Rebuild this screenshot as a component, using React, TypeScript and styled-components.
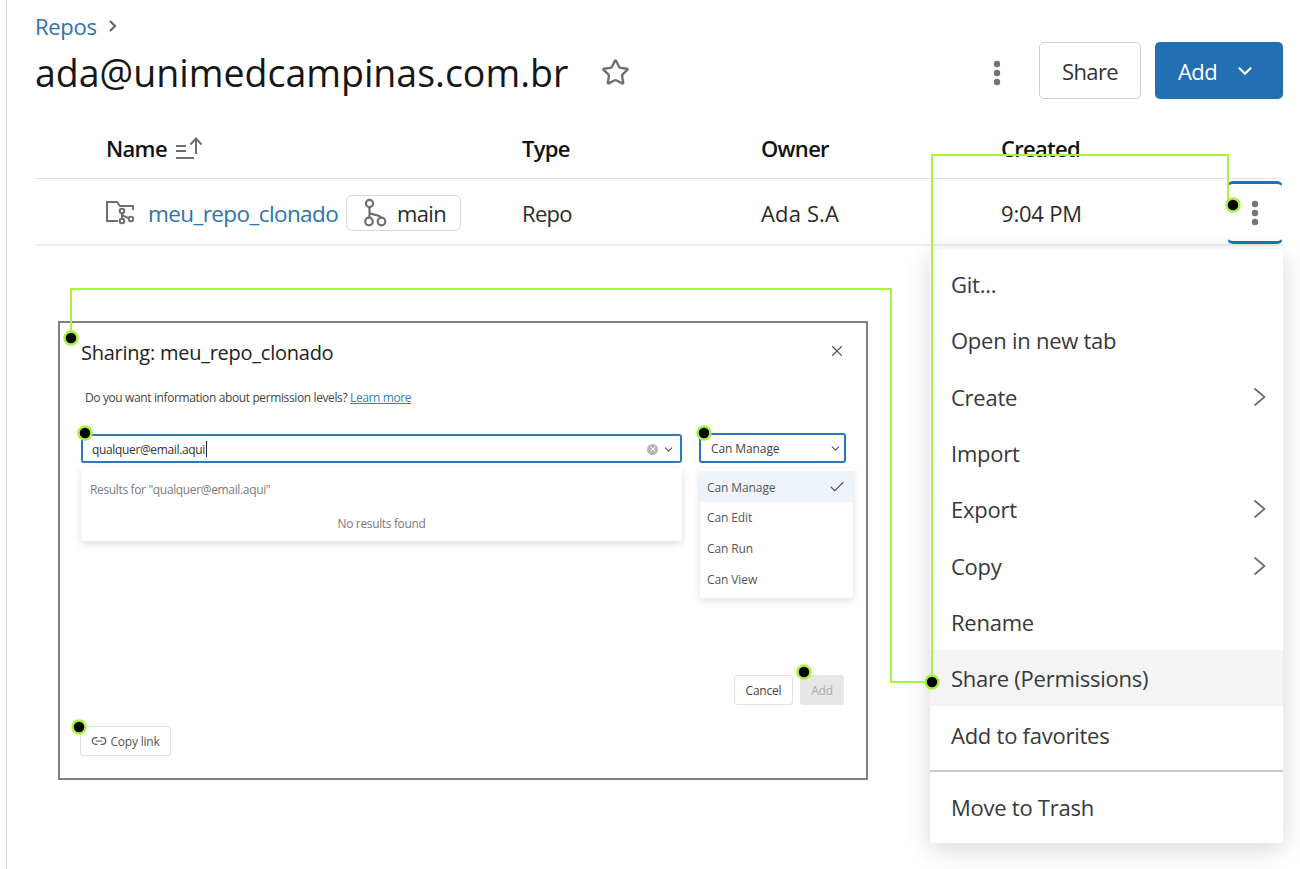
import React from 'react';
import styled, { createGlobalStyle } from 'styled-components';
import { Star, ChevronDown, X, Check, Link2 } from 'lucide-react';

const GlobalStyle = createGlobalStyle`
  html, body {
    margin: 0;
    padding: 0;
    background: #fff;
  }
  * {
    box-sizing: border-box;
  }
  body {
    font-family: 'Open Sans', 'Noto Sans', 'Liberation Sans', sans-serif;
    color: #1f1f1f;
  }
`;

const Page = styled.div`
  position: relative;
  width: 1294px;
  height: 869px;
  overflow: hidden;
  margin-left: 6px;
  border-left: 1px solid #d9d9d9;
  padding: 10px 17px 0 28px;
`;

const Breadcrumb = styled.div`
  display: flex;
  align-items: center;
  gap: 11px;
  height: 32px;
  color: #2f72ad;
  font-size: 22px;
  letter-spacing: -0.3px;
`;

const SmallChevron = styled.svg`
  display: block;
  fill: none;
  stroke: #5f5f5f;
  stroke-width: 2;
`;

const TitleRow = styled.div`
  display: flex;
  align-items: center;
  height: 60px;
`;

const Title = styled.h1`
  margin: 0;
  font-size: 37.5px;
  font-weight: 400;
  color: #161616;
`;

const StarButton = styled.span`
  display: flex;
  margin-left: 33px;
  margin-right: auto;
  color: #6f6f6f;
`;

const TitleActions = styled.div`
  display: flex;
  align-items: center;
  margin-bottom: 4px;
`;

const Dots = styled.svg`
  display: block;
  width: 8px;
  height: 26px;
  fill: #757575;
`;

const KebabTop = styled.span`
  display: flex;
  margin-top: 5px;
  margin-right: 38px;
`;

const ShareButton = styled.button`
  width: 102px;
  height: 57px;
  margin-right: 14px;
  padding: 2px 0 0;
  background: #fff;
  border: 1px solid #d0d0d0;
  border-radius: 5px;
  color: #333;
  font: inherit;
  font-size: 22px;
  letter-spacing: -0.6px;
`;

const AddButton = styled.button`
  display: flex;
  align-items: center;
  justify-content: center;
  gap: 17px;
  width: 128px;
  height: 57px;
  padding: 2px 4px 0 0;
  background: #2270b3;
  border: none;
  border-radius: 5px;
  color: #fff;
  font: inherit;
  font-size: 22px;
  letter-spacing: -0.6px;
`;

const TableRow = styled.div<{ $head?: boolean }>`
  display: grid;
  grid-template-columns: 416px 239px 240px 1fr;
  align-items: center;
  padding-left: 71px;
  height: ${({ $head }) => ($head ? '53px' : '67px')};
  margin-top: ${({ $head }) => ($head ? '24px' : '0')};
  padding-top: ${({ $head }) => ($head ? '0' : '2px')};
  padding-bottom: ${({ $head }) => ($head ? '9px' : '0')};
  border-bottom: ${({ $head }) => ($head ? '1px solid #e3e3e3' : '2px solid #ececec')};
  font-size: 22px;
  font-weight: ${({ $head }) => ($head ? 600 : 400)};
  letter-spacing: -0.7px;
  color: ${({ $head }) => ($head ? '#111' : '#2b2b2b')};
`;

const NameHead = styled.div`
  display: flex;
  align-items: center;
  gap: 8px;
`;

const NameCell = styled.div`
  display: flex;
  align-items: center;
`;

const RepoLink = styled.a`
  margin: 2px 0 0 14px;
  color: #2f72ad;
  font-size: 22.5px;
  letter-spacing: -0.6px;
`;

const BranchBadge = styled.span`
  display: flex;
  align-items: center;
  gap: 10px;
  width: 115px;
  height: 36px;
  margin-left: 8px;
  padding-left: 16px;
  border: 1px solid #d8d8d8;
  border-radius: 6px;
`;

const OwnerCell = styled.div`
  letter-spacing: 0.15px;
`;

const CreatedCell = styled.div`
  display: flex;
  align-items: center;
  justify-content: space-between;
  height: 100%;
  letter-spacing: -0.2px;
`;

const RowKebab = styled.span`
  display: flex;
  align-items: center;
  justify-content: center;
  width: 56px;
  height: 63px;
  border-top: 3px solid #2270b3;
  border-bottom: 3px solid #2270b3;
  border-left: 1px solid transparent;
  border-right: 1px solid transparent;
  border-radius: 6px;
`;

const Lower = styled.div`
  display: flex;
  justify-content: space-between;
  align-items: flex-start;
  padding-left: 23px;
  padding-top: 3px;
`;

const Dialog = styled.div`
  display: flex;
  flex-direction: column;
  width: 810px;
  height: 459px;
  margin-top: 72px;
  padding: 0 22px 22px 21px;
  border: 2px solid #808080;
`;

const DialogHead = styled.div`
  display: flex;
  align-items: center;
  justify-content: space-between;
  height: 58px;
  font-size: 20px;
  font-weight: 500;
  letter-spacing: -0.25px;
  color: #222;
  svg {
    color: #555;
    margin: -2px -2px 0 0;
  }
`;

const InfoText = styled.p`
  margin: 5px 0 0 4px;
  height: 47px;
  font-size: 12px;
  letter-spacing: -0.38px;
  line-height: 24px;
  color: #444;
  a {
    color: #2f7fc4;
    text-decoration: underline;
  }
`;

const Fields = styled.div`
  display: flex;
  gap: 17px;
`;

const SearchColumn = styled.div`
  flex: none;
  width: 601px;
`;

const RoleColumn = styled.div`
  flex: none;
  width: 154px;
`;

const SearchInput = styled.div`
  display: flex;
  align-items: center;
  height: 29px;
  margin-top: 1px;
  padding: 1px 5px 0 9px;
  border: 2px solid #3079b8;
  border-radius: 3px;
  font-size: 12px;
  letter-spacing: -0.35px;
  color: #333;
`;

const Caret = styled.span`
  width: 1px;
  height: 16px;
  margin-left: 1px;
  margin-right: auto;
  background: #222;
`;

const ClearIcon = styled.span`
  display: flex;
  align-items: center;
  justify-content: center;
  width: 11px;
  height: 11px;
  margin-right: 4px;
  border-radius: 50%;
  background: #b5b5b5;
  color: #fff;
`;

const ResultsPanel = styled.div`
  height: 73px;
  margin-top: 5px;
  padding: 13px 9px;
  border-radius: 3px;
  background: #fff;
  box-shadow: 0 3px 9px rgba(0, 0, 0, 0.13);
  font-size: 12px;
  letter-spacing: -0.35px;
  color: #7a7a7a;
`;

const NoResults = styled.div`
  margin-top: 17px;
  text-align: center;
`;

const RoleSelect = styled.div`
  display: flex;
  align-items: center;
  justify-content: space-between;
  width: 147px;
  height: 30px;
  padding: 0 2px 0 10px;
  border: 2px solid #2a75b5;
  border-radius: 3px;
  font-size: 12px;
  letter-spacing: -0.1px;
  color: #444;
`;

const RoleMenu = styled.div`
  width: 153px;
  height: 130px;
  margin-top: 5px;
  margin-left: 1px;
  padding-top: 3px;
  border-radius: 3px;
  background: #fff;
  box-shadow: 0 3px 9px rgba(0, 0, 0, 0.13);
`;

const RoleItem = styled.div<{ $selected?: boolean }>`
  display: flex;
  align-items: center;
  justify-content: space-between;
  height: 30.6px;
  padding: 2px 7px 0;
  background: ${({ $selected }) => ($selected ? '#edf3f9' : 'transparent')};
  font-size: 12px;
  letter-spacing: -0.1px;
  color: #555;
`;

const DialogActions = styled.div`
  display: flex;
  justify-content: flex-end;
  gap: 7px;
  margin-top: auto;
  margin-bottom: 21px;
`;

const SmallButton = styled.button<{ $disabled?: boolean }>`
  height: 30px;
  padding: 0;
  width: ${({ $disabled }) => ($disabled ? '44px' : '59px')};
  background: ${({ $disabled }) => ($disabled ? '#e6e6e6' : '#fff')};
  border: 1px solid ${({ $disabled }) => ($disabled ? '#e6e6e6' : '#e0e0e0')};
  border-radius: 3px;
  color: ${({ $disabled }) => ($disabled ? '#aaa' : '#444')};
  font: inherit;
  font-size: 12px;
  letter-spacing: -0.2px;
`;

const CopyLink = styled.button`
  display: flex;
  align-items: center;
  justify-content: center;
  gap: 3px;
  width: 91px;
  height: 30px;
  margin-left: -1px;
  background: #fff;
  border: 1px solid #e0e0e0;
  border-radius: 3px;
  color: #555;
  font: inherit;
  font-size: 12px;
  letter-spacing: -0.2px;
`;

const Menu = styled.div`
  display: flex;
  flex-direction: column;
  width: 353px;
  height: 594px;
  padding-top: 7px;
  border-radius: 4px;
  background: #fff;
  box-shadow: 0 6px 26px rgba(0, 0, 0, 0.16);
`;

const MenuItem = styled.div<{ $active?: boolean }>`
  display: flex;
  align-items: center;
  justify-content: space-between;
  flex: none;
  height: 56.3px;
  padding: 0 17px 0 21px;
  background: ${({ $active }) => ($active ? '#f4f4f4' : 'transparent')};
  font-size: 22px;
  letter-spacing: -0.25px;
  color: #37383b;
`;

const MoreChevron = styled.svg`
  display: block;
  fill: none;
  stroke: #6b6b6b;
  stroke-width: 1.7;
`;

const MenuDivider = styled.div`
  flex: none;
  height: 2px;
  margin: 7px 0 7px;
  background: #c9c9c9;
`;

const Overlay = styled.svg`
  position: absolute;
  top: 0;
  left: -7px;
  width: 1300px;
  height: 869px;
  pointer-events: none;
`;

const Leader = styled.polyline`
  fill: none;
  stroke: #a6f53c;
  stroke-width: 2;
`;

const Marker = styled.circle`
  fill: #000;
  stroke: #a6f53c;
  stroke-width: 2.5;
`;

const markers = [
  [1233, 205],
  [71, 338],
  [85, 433],
  [704, 433],
  [804, 672],
  [79, 727],
  [932, 682],
];

const menuItems = [
  { label: 'Git...' },
  { label: 'Open in new tab' },
  { label: 'Create', more: true },
  { label: 'Import' },
  { label: 'Export', more: true },
  { label: 'Copy', more: true },
  { label: 'Rename' },
  { label: 'Share (Permissions)', active: true },
  { label: 'Add to favorites' },
];

const roles = ['Can Manage', 'Can Edit', 'Can Run', 'Can View'];

const VerticalDots = () => (
  <Dots viewBox="0 0 8 26">
    <circle cx="4" cy="4" r="3.2" />
    <circle cx="4" cy="13" r="3.2" />
    <circle cx="4" cy="22" r="3.2" />
  </Dots>
);

const SortIcon = () => (
  <svg width="27" height="24" viewBox="0 0 27 24" fill="none" stroke="#6f6f6f" strokeWidth="2">
    <path d="M1 10h10M1 15h10M1 22h18" />
    <path d="M21 18V3M15.500 8.500L21 2.500l5.500 6" />
  </svg>
);

const RepoIcon = () => (
  <svg width="28" height="25" viewBox="0 0 28 25" fill="none" stroke="#6f6f6f" strokeWidth="2">
    <path d="M12 21H1V2h10l3 4h13v4" />
    <circle cx="16" cy="11" r="2.300" />
    <circle cx="16" cy="21" r="2.300" />
    <circle cx="25" cy="19" r="2.300" />
    <path d="M16 13v6M16 14c1 3 4 3 7 4" />
  </svg>
);

const BranchIcon = () => (
  <svg width="24" height="30" viewBox="0 0 24 30" fill="none" stroke="#6f6f6f" strokeWidth="2.200">
    <circle cx="6.500" cy="5.500" r="3.600" />
    <circle cx="6" cy="23.500" r="3.800" />
    <circle cx="18.500" cy="23.500" r="3.800" />
    <path d="M6.500 9v10.700M6.500 14c0 3.500 9.500 1.500 11.500 5.700" />
  </svg>
);

export default function App() {
  return (
    <>
      <GlobalStyle />
      <Page>
        <Breadcrumb>
          Repos
          <SmallChevron width="10" height="16" viewBox="0 0 10 16">
            <path d="M2 3l5 5-5 5" />
          </SmallChevron>
        </Breadcrumb>
        <TitleRow>
          <Title>ada@unimedcampinas.com.br</Title>
          <StarButton>
            <Star size={29} strokeWidth={2} />
          </StarButton>
          <TitleActions>
            <KebabTop>
              <VerticalDots />
            </KebabTop>
            <ShareButton>Share</ShareButton>
            <AddButton>
              Add <ChevronDown size={22} strokeWidth={2.4} />
            </AddButton>
          </TitleActions>
        </TitleRow>

        <TableRow $head>
          <NameHead>
            Name <SortIcon />
          </NameHead>
          <div>Type</div>
          <div>Owner</div>
          <div>Created</div>
        </TableRow>
        <TableRow>
          <NameCell>
            <RepoIcon />
            <RepoLink>meu_repo_clonado</RepoLink>
            <BranchBadge>
              <BranchIcon /> main
            </BranchBadge>
          </NameCell>
          <div>Repo</div>
          <OwnerCell>Ada S.A</OwnerCell>
          <CreatedCell>
            9:04 PM
            <RowKebab>
              <VerticalDots />
            </RowKebab>
          </CreatedCell>
        </TableRow>

        <Lower>
          <Dialog>
            <DialogHead>
              Sharing: meu_repo_clonado
              <X size={18} strokeWidth={1.5} />
            </DialogHead>
            <InfoText>
              Do you want information about permission levels? <a>Learn more</a>
            </InfoText>
            <Fields>
              <SearchColumn>
                <SearchInput>
                  qualquer@email.aqui
                  <Caret />
                  <ClearIcon>
                    <X size={8} strokeWidth={3} />
                  </ClearIcon>
                  <ChevronDown size={13} strokeWidth={2} color="#555" />
                </SearchInput>
                <ResultsPanel>
                  Results for "qualquer@email.aqui"
                  <NoResults>No results found</NoResults>
                </ResultsPanel>
              </SearchColumn>
              <RoleColumn>
                <RoleSelect>
                  Can Manage
                  <ChevronDown size={13} strokeWidth={2} color="#555" />
                </RoleSelect>
                <RoleMenu>
                  {roles.map((role, i) => (
                    <RoleItem key={role} $selected={i === 0}>
                      {role}
                      {i === 0 && <Check size={18} strokeWidth={1.5} />}
                    </RoleItem>
                  ))}
                </RoleMenu>
              </RoleColumn>
            </Fields>
            <DialogActions>
              <SmallButton>Cancel</SmallButton>
              <SmallButton $disabled>Add</SmallButton>
            </DialogActions>
            <CopyLink>
              <Link2 size={16} strokeWidth={1.8} />
              Copy link
            </CopyLink>
          </Dialog>

          <Menu>
            {menuItems.map((item) => (
              <MenuItem key={item.label} $active={item.active}>
                {item.label}
                {item.more && (
                  <MoreChevron width="13" height="20" viewBox="0 0 13 20">
                    <path d="M1.500 1.500L11.500 10l-10 8.500" />
                  </MoreChevron>
                )}
              </MenuItem>
            ))}
            <MenuDivider />
            <MenuItem>Move to Trash</MenuItem>
          </Menu>
        </Lower>

        <Overlay viewBox="0 0 1300 869">
          <Leader points="1228,200 1228,155 932,155 932,682" />
          <Leader points="71,338 71,289 891,289 891,682 932,682" />
          {markers.map(([cx, cy]) => (
            <Marker key={`${cx}-${cy}`} cx={cx} cy={cy} r="6.500" />
          ))}
        </Overlay>
      </Page>
    </>
  );
}
